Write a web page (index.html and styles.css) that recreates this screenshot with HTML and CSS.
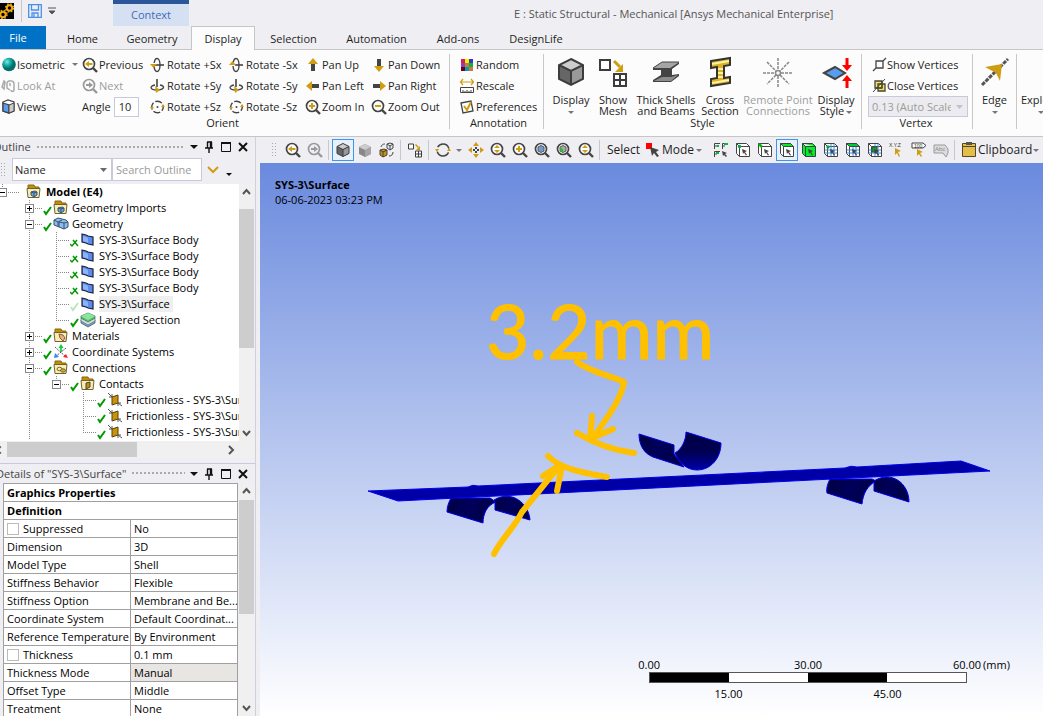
FILE: index.html
```html
<!DOCTYPE html>
<html lang="en">
<head>
<meta charset="utf-8">
<title>E : Static Structural - Mechanical [Ansys Mechanical Enterprise]</title>
<link rel="stylesheet" href="styles.css">
</head>
<body>
<svg class="defs" aria-hidden="true">
  <symbol id="lens" viewBox="0 0 16 16"><circle cx="7" cy="7" r="5.500" fill="#fff" stroke="#444" stroke-width="1.700"/><path d="M11 11l4 4" stroke="#444" stroke-width="2.400"/></symbol>
  <symbol id="zoom-prev" viewBox="0 0 16 16"><use href="#lens"/><path d="M3 7l4-3v2h3.500v2H7v2z" fill="#cf9d12"/></symbol>
  <symbol id="zoom-next" viewBox="0 0 16 16"><g stroke="#999" fill="none"><circle cx="7" cy="7" r="5.500" stroke-width="1.700"/><path d="M11 11l4 4" stroke-width="2.400"/></g><path d="M11 7L7 4v2H4v2h3v2z" fill="#999"/></symbol>
  <symbol id="zoom-in" viewBox="0 0 16 16"><use href="#lens"/><path d="M4 7h6M7 4v6" stroke="#cf9d12" stroke-width="2"/></symbol>
  <symbol id="zoom-out" viewBox="0 0 16 16"><use href="#lens"/><path d="M4 7h6" stroke="#cf9d12" stroke-width="2"/></symbol>
  <symbol id="zoom-drag" viewBox="0 0 16 16"><use href="#lens"/><path d="M4 6l3-3 3 3zM4 8l3 3 3-3z" fill="#cf9d12"/></symbol>
  <symbol id="zoom-blue" viewBox="0 0 16 16"><use href="#lens"/><path d="M4 5l3-1.500L10 5v4l-3 1.500L4 9z" fill="#6f9bd8" stroke="#555"/></symbol>
  <symbol id="zoom-green" viewBox="0 0 16 16"><use href="#lens"/><path d="M4 5l3-1.500L10 5v4l-3 1.500L4 9z" fill="#aaa" stroke="#555"/><path d="M4 6l3 1v3L4 9z" fill="#1fc12e"/></symbol>
  <symbol id="rot-xp" viewBox="0 0 16 16"><ellipse cx="7" cy="8" rx="3" ry="6.500" fill="none" stroke="#444" stroke-width="1.400" stroke-dasharray="14 3"/><path d="M4 8h10" stroke="#444" stroke-width="1.600"/><path d="M0 7h7L3.500 11z" fill="#cf9d12"/></symbol>
  <symbol id="rot-xn" viewBox="0 0 16 16"><ellipse cx="7" cy="8" rx="3" ry="6.500" fill="none" stroke="#444" stroke-width="1.400" stroke-dasharray="14 3"/><path d="M6 8h8" stroke="#444" stroke-width="1.600"/><path d="M0 8h7L3.500 4z" fill="#cf9d12"/></symbol>
  <symbol id="rot-y" viewBox="0 0 16 16"><path d="M5 7C-1 8 0 12 7 12s9-4 3-5" fill="none" stroke="#444" stroke-width="1.400"/><path d="M7 1v8" stroke="#444" stroke-width="1.600"/><path d="M5 8l5 4-4 3z" fill="#cf9d12"/></symbol>
  <symbol id="rot-z" viewBox="0 0 16 16"><circle cx="7.500" cy="8" r="5.800" fill="none" stroke="#444" stroke-width="1.400" stroke-dasharray="7.100 2" stroke-dashoffset="3"/><circle cx="7.500" cy="8" r="1" fill="#444"/><path d="M0 8h4l-2 3zM11 8h4l-2-3z" fill="#cf9d12"/></symbol>
  <symbol id="arrow" viewBox="0 0 16 16"><path d="M8 1l5 6H3z" fill="#cf9d12"/><path d="M6 7h4v7H6z" fill="#444"/></symbol>
  <symbol id="cube" viewBox="0 0 32 32"><path d="M16 3l12 6v14l-12 6-12-6V9z" fill="#666"/><path d="M16 3l12 6-12 6L4 9z" fill="#ccc"/><path d="M28 9v14l-12 6V15z" fill="#999"/><path d="M16 3l12 6v14l-12 6-12-6V9zM4 9l12 6 12-6M16 15v14" fill="none" stroke="#3c3c3c" stroke-width="2"/></symbol>
  <symbol id="mesh" viewBox="0 0 32 32"><g fill="#fff" stroke="#3c3c3c" stroke-width="2"><path d="M3 4h10v10H3zM17 18h12v12H17zM23 18v12M17 24h12"/></g><path d="M17 5l6 6" stroke="#cf9d12" stroke-width="3"/><path d="M26 8v8h-8z" fill="#cf9d12"/></symbol>
  <symbol id="box" viewBox="0 0 16 16"><path d="M1.500 1.500h10l3 3v10h-10l-3-3z" fill="#fff"/><path d="M1.500 11.500v-10h10l3 3v10h-10zM1.500 1.500l3 3h10M4.500 4.500v10" fill="none" stroke="#444"/></symbol>
  <symbol id="tip" viewBox="0 0 16 16"><path d="M7 7l5 2-2 1 2 3-1 .600-2-3-1 1.400z" fill="#444"/></symbol>
  <symbol id="pick-vertex" viewBox="0 0 16 16"><use href="#box"/><use href="#tip"/><circle cx="4.500" cy="4.500" r="1.700" fill="#0a3"/></symbol>
  <symbol id="pick-edge" viewBox="0 0 16 16"><use href="#box"/><use href="#tip"/><path d="M2 2l3 3" stroke="#0b0" stroke-width="2.500"/></symbol>
  <symbol id="pick-face" viewBox="0 0 16 16"><use href="#box"/><path d="M1.500 1.500h10l3 3h-10z" fill="#00ef25" stroke="#444"/><use href="#tip"/></symbol>
  <symbol id="pick-body" viewBox="0 0 16 16"><path d="M1.500 11.500v-10h10l3 3v10h-10zM1.500 1.500l3 3h10M4.500 4.500v10" fill="#00ef25" stroke="#344"/><use href="#tip"/></symbol>
  <symbol id="grid-box" viewBox="0 0 16 16"><use href="#box"/><path d="M8 2v12M11 2v12M2 8h12M2 11h12" stroke="#3c8ee8"/><use href="#tip"/></symbol>
  <symbol id="check" viewBox="0 0 9 16"><path d="M1 11l2 3 5-7" fill="none" stroke="#090" stroke-width="2"/></symbol>
  <symbol id="check-x" viewBox="0 0 9 16"><path d="M0 12l2 2 5-6M3 8l5 6" fill="none" stroke="#090" stroke-width="1.500"/></symbol>
  <symbol id="folder" viewBox="0 0 16 16"><path d="M2 4V1h6l1 2h4v3H2z" fill="#c38d0b" stroke="#8a650a"/><path d="M1 4.500h13l-1 9H2z" fill="#f8eeb0" stroke="#6c6235"/></symbol>
  <symbol id="f-cube" viewBox="0 0 16 16"><use href="#folder"/><path d="M5 8l4-1 2 1v3l-3 2-3-2z" fill="#75a7dc" stroke="#35536f"/><path d="M5 8l3 1 3-1M8 9v4" stroke="#35536f" fill="none"/></symbol>
  <symbol id="f-mat" viewBox="0 0 16 16"><use href="#folder"/><path d="M6 6l4 1 2 3-2 3-3-3z" fill="#e9b186" stroke="#8b5c3c"/></symbol>
  <symbol id="f-con" viewBox="0 0 16 16"><use href="#folder"/><ellipse cx="6.500" cy="9" rx="2.500" ry="1.700" fill="none" stroke="#7c6420"/><ellipse cx="10" cy="10.500" rx="2.500" ry="1.700" fill="#c8aa48" stroke="#7c6420"/></symbol>
  <symbol id="f-contact" viewBox="0 0 16 16"><use href="#folder"/><path d="M6 7l4-1v5l-4 2z" fill="#c38d0b" stroke="#444"/></symbol>
  <symbol id="cubes" viewBox="0 0 16 16"><path d="M1 4l4-2 4 1 4 1 2 2v5l-4 2-5-2-5-2z" fill="#8fbcec" stroke="#35536f"/><path d="M1 4l4 2v4M5 6l4-2M6 6l5 1 4-1M11 7v6M6 6v5" fill="none" stroke="#35536f"/></symbol>
  <symbol id="surface" viewBox="0 0 16 16"><path d="M2 2l4 1 2 1 5 1v8l-5-1-2-1-4-1z" fill="#5b8df0" stroke="#1b2038" stroke-width="1.200"/><path d="M3 4l3 1 2 1v5l-2-1-3-1z" fill="#8db2fa"/></symbol>
  <symbol id="layers" viewBox="0 0 16 16"><path d="M1 8v3l7 4 7-4V8l-7 3z" fill="#6ea5df" stroke="#355" stroke-width=".700"/><path d="M1 6v3l7 4 7-4V6l-7 3z" fill="#ddd" stroke="#576" stroke-width=".700"/><path d="M1 4l7-3 7 3v2l-7 4-7-4z" fill="#5cc871" stroke="#365" stroke-width=".700"/><path d="M1 4l7-3 7 3-7 4z" fill="#8be59a"/></symbol>
  <symbol id="axes" viewBox="0 0 16 16"><path d="M2 3l11 10M13 4L2 13" stroke="#555" stroke-dasharray="2 1"/><path d="M8 2v6" stroke="#0b3" stroke-width="1.500"/><path d="M5.500 4L8 0l2.500 4z" fill="#1c3"/><path d="M1 14l1-5 4 4z" fill="#38f"/><path d="M15 14l-5-1 3-3z" fill="#f22"/></symbol>
  <symbol id="contact" viewBox="0 0 16 16"><path d="M1 1l4 4M5 2v3H2M15 14l-4-3M11 14v-3h3" stroke="#555" fill="none"/><path d="M5 5l6-2v8l-6 2z" fill="#c8920f" stroke="#5b420a"/></symbol>
  <symbol id="pin" viewBox="0 0 12 12"><path d="M4 1h5M4.500 1v6M7.500 1v6M8.500 1v6M2 7h8M6 7v5" fill="none" stroke="#111" stroke-width="1.400"/></symbol>
  <symbol id="max" viewBox="0 0 12 12"><path d="M1.500 1.500h9v9h-9z" fill="none" stroke="#111"/><path d="M1 2h10" stroke="#111" stroke-width="2"/></symbol>
  <symbol id="close" viewBox="0 0 12 12"><path d="M2 2l8 8M10 2l-8 8" stroke="#111" stroke-width="2"/></symbol>
</svg>

<div class="app">
<header class="titlebar">
  <svg class="logo" viewBox="0 0 14 16"><path d="M0 0h14v16H0z"/><g fill="none" stroke="#f0a818"><circle cx="9.500" cy="5" r="2.700" stroke-width="2"/><circle cx="9.500" cy="5" r="4" stroke-width="1.500" stroke-dasharray="1.500 1.700"/><circle cx="3" cy="11.500" r="2.700" stroke-width="2"/><circle cx="3" cy="11.500" r="4" stroke-width="1.500" stroke-dasharray="1.500 1.700"/></g></svg>
  <i class="bar-line"></i>
  <button class="plain" aria-label="Save"><svg class="i14" viewBox="0 0 14 14"><path d="M.7.700h12.600v12.600H.7zM3.500 1v5h7V1M4 13V9h6v4M6 10v3" fill="none" stroke="#4a90e8" stroke-width="1.300"/></svg></button>
  <button class="plain quick" aria-label="Customize"><svg class="i8" viewBox="0 0 8 8"><path d="M0 1h8M1 4h6L4 7z" stroke="#555" fill="#555"/></svg></button>
  <div class="context">Context</div>
  <div class="title">E : Static Structural - Mechanical [Ansys Mechanical Enterprise]</div>
</header>

<nav class="tabs">
  <button class="file">File</button>
  <button class="t-home">Home</button>
  <button class="t-geo">Geometry</button>
  <button class="t-disp active">Display</button>
  <button class="t-sel">Selection</button>
  <button class="t-auto">Automation</button>
  <button class="t-add">Add-ons</button>
  <button class="t-life">DesignLife</button>
</nav>

<section class="ribbon">
  <div class="group orient">
    <div class="cmds">
      <button><svg class="i16" viewBox="0 0 16 16"><defs><radialGradient id="ball" cx=".35" cy=".3"><stop offset="0" stop-color="#7fe8e2"/><stop offset=".5" stop-color="#17b3ac"/><stop offset="1" stop-color="#056e6a"/></radialGradient></defs><circle cx="9" cy="7.500" r="6.800" fill="url(#ball)"/></svg>Isometric<i class="caret far"></i></button>
      <button><svg class="i16"><use href="#zoom-prev"/></svg>Previous</button>
      <button><svg class="i16"><use href="#rot-xp"/></svg>Rotate +Sx</button>
      <button><svg class="i16"><use href="#rot-xn"/></svg>Rotate -Sx</button>
      <button><svg class="i16"><use href="#arrow"/></svg>Pan Up</button>
      <button><svg class="i16 down"><use href="#arrow"/></svg>Pan Down</button>
      <button disabled><svg class="i16" viewBox="0 0 16 16"><path d="M4 3L2 9l2 2 1-7zM7 5c1-3 7-3 7 1v6c0 2-3 2-3 0M7 5v5l3 2M10 5v3" fill="none" stroke="#aaa" stroke-width="1.500"/></svg>Look At</button>
      <button disabled><svg class="i16"><use href="#zoom-next"/></svg>Next</button>
      <button><svg class="i16"><use href="#rot-y"/></svg>Rotate +Sy</button>
      <button><svg class="i16"><use href="#rot-y"/></svg>Rotate -Sy</button>
      <button><svg class="i16 left"><use href="#arrow"/></svg>Pan Left</button>
      <button><svg class="i16 right"><use href="#arrow"/></svg>Pan Right</button>
      <button><svg class="i16" viewBox="0 0 16 16"><path d="M3 3l5-2 6 2v9l-5 2-6-2z" fill="#fff" stroke="#444" stroke-width="1.300"/><path d="M3 4l6 2v8l-6-2z" fill="#5a9cf0" stroke="#444" stroke-width="1.300"/><path d="M9 6l5-2v8l-5 2z" fill="#ccc" stroke="#444"/></svg>Views</button>
      <label class="angle">Angle <input value="10"></label>
      <button><svg class="i16"><use href="#rot-z"/></svg>Rotate +Sz</button>
      <button><svg class="i16"><use href="#rot-z"/></svg>Rotate -Sz</button>
      <button><svg class="i16"><use href="#zoom-in"/></svg>Zoom In</button>
      <button><svg class="i16"><use href="#zoom-out"/></svg>Zoom Out</button>
    </div>
    <div class="label">Orient</div>
  </div>
  <div class="group annot">
    <div class="list">
      <button><svg class="i16" viewBox="0 0 16 16"><path d="M2 2h4v4H2z" fill="#d4204c"/><path d="M6 2h4v4H6z" fill="#f5f000"/><path d="M10 2h4v4h-4z" fill="#3b35c8"/><path d="M2 6h4v4H2z" fill="#8e3fc0"/><path d="M6 6h4v4H6z" fill="#c3803a"/><path d="M10 6h4v4h-4z" fill="#00b83a"/><path d="M2 10h4v4H2z" fill="#710010"/><path d="M6 10h4v4H6z" fill="#009ec0"/><path d="M10 10h4v4h-4z" fill="#e0703a"/></svg>Random</button>
      <button><svg class="i16" viewBox="0 0 16 16"><path d="M2 4h12M4 1L1.500 4 4 7M12 1l2.500 3L12 7" fill="none" stroke="#cf9d12" stroke-width="1.200"/><path d="M1.500 9.500h13v5h-13zM4 12v2M6 13v1M8 12v2M10 13v1M12 12v2" fill="none" stroke="#444"/></svg>Rescale</button>
      <button><svg class="i16" viewBox="0 0 16 16"><path d="M2 4l10-2 2 10-10 2z" fill="#fff" stroke="#444" stroke-width="1.300"/><path d="M5 7l3 4 4-8" fill="none" stroke="#cf9d12" stroke-width="2"/></svg>Preferences</button>
    </div>
    <div class="label">Annotation</div>
  </div>
  <div class="group style">
    <div class="bigs">
      <button><svg class="i32"><use href="#cube"/></svg><span>Display</span><i class="caret"></i></button>
      <button><svg class="i32"><use href="#mesh"/></svg><span>Show<br>Mesh</span></button>
      <button><svg class="i32" viewBox="0 0 32 32"><path d="M3 12l9-6h17l-9 6z" fill="#a5a5a5"/><path d="M3 12h17l9-6v2l-7 5v6l7-1v2l-8 6H3v-2l8-5v-5H3z" fill="#444"/><path d="M4 25l8-4 9 0 7-2-7 6z" fill="#8c8c8c"/><path d="M3 12l9-6h17" fill="none" stroke="#444"/></svg><span>Thick Shells<br>and Beams</span></button>
      <button><svg class="i32" viewBox="0 0 32 32"><path d="M7 5l19-3v7l-6 1v12l6-1v6L7 30v-7l6-1V11l-6 1z" fill="#dbb02a" stroke="#333" stroke-width="2"/><path d="M8 8l17-3M14 13h5M14 17h5M14 21h5M8 27l17-3" stroke="#fff39a" stroke-width="2"/></svg><span>Cross<br>Section</span></button>
      <button disabled><svg class="i32" viewBox="0 0 32 32"><circle cx="16" cy="17" r="2.500" fill="none" stroke="#888" stroke-width="1.500"/><path d="M16 2v12M16 20v12M1 17h12M19 17h12M5 6l9 9M18 19l9 9M27 6l-9 9M14 19l-9 9" stroke="#888" stroke-width="1.500" stroke-dasharray="3 1"/></svg><span>Remote Point<br>Connections</span></button>
      <button><svg class="i32" viewBox="0 0 32 32"><path d="M4 17l11-6 10 6-10 6z" fill="#589cf0" stroke="#444" stroke-width="2"/><path d="M27 2v8M27 32v-8" stroke="red" stroke-width="3"/><path d="M22 9h10l-5 6zM22 25h10l-5-6z" fill="red"/></svg><span>Display<br>Style<i class="caret in"></i></span></button>
    </div>
    <div class="label">Style</div>
  </div>
  <div class="group vertex">
    <div class="list">
      <button><svg class="i16" viewBox="0 0 16 16"><path d="M5 4h7v7H5zM12 4l3-3M5 11l-3 3" fill="none" stroke="#444" stroke-width="1.300"/></svg>Show Vertices</button>
      <button><svg class="i16" viewBox="0 0 16 16"><path d="M4 3h7v7H4zM7 6h7v7H7z" fill="#f9e34a" stroke="#444" stroke-width="1.300"/><path d="M14 1L2 14M4 10h7V3" stroke="#444" fill="none"/></svg>Close Vertices</button>
      <select disabled aria-label="Vertex size"><option>0.13 (Auto Scale)</option></select>
    </div>
    <div class="label">Vertex</div>
  </div>
  <div class="group edge"><button class="big"><svg class="i32" viewBox="0 0 32 32"><path d="M3 29L29 3" stroke="#555" stroke-width="3" stroke-dasharray="4 1"/><path d="M6 11l17-3-2 17-4-8z" fill="#cf9d12"/></svg><span>Edge</span><i class="caret"></i></button></div>
  <div class="group explode"><button class="big"><svg class="i32"></svg><span>Explode</span><i class="caret"></i></button></div>
</section>

<main class="work">
  <aside class="side">
    <section class="outline">
      <div class="panel-head"><span>Outline</span><i class="dots"></i><i class="caret dark"></i><svg class="i12"><use href="#pin"/></svg><svg class="i12"><use href="#max"/></svg><svg class="i12"><use href="#close"/></svg></div>
      <div class="filter"><i class="grip"></i><select aria-label="Filter by"><option>Name</option></select><input placeholder="Search Outline" aria-label="Search Outline"><svg class="chev" viewBox="0 0 12 8"><path d="M1 1l5 5 5-5" fill="none" stroke="#cf9d12" stroke-width="2"/></svg><i class="caret dark low"></i></div>
      <div class="tree-wrap">
        <div class="tree">
          <div class="row root"><i class="joint end"><b class="minus"></b></i><i class="mark dash"></i><svg class="i16"><use href="#f-cube"/></svg><strong>Model (E4)</strong></div>
          <div class="row"><i class="joint"><b class="plus"></b></i><svg class="mark"><use href="#check"/></svg><svg class="i16"><use href="#f-cube"/></svg><span>Geometry Imports</span></div>
          <div class="row"><i class="joint"><b class="minus"></b></i><svg class="mark"><use href="#check"/></svg><svg class="i16"><use href="#cubes"/></svg><span>Geometry</span></div>
          <div class="row"><i class="rail"></i><i class="joint"></i><svg class="mark"><use href="#check-x"/></svg><svg class="i16"><use href="#surface"/></svg><span>SYS-3\Surface Body</span></div>
          <div class="row"><i class="rail"></i><i class="joint"></i><svg class="mark"><use href="#check-x"/></svg><svg class="i16"><use href="#surface"/></svg><span>SYS-3\Surface Body</span></div>
          <div class="row"><i class="rail"></i><i class="joint"></i><svg class="mark"><use href="#check-x"/></svg><svg class="i16"><use href="#surface"/></svg><span>SYS-3\Surface Body</span></div>
          <div class="row"><i class="rail"></i><i class="joint"></i><svg class="mark"><use href="#check-x"/></svg><svg class="i16"><use href="#surface"/></svg><span>SYS-3\Surface Body</span></div>
          <div class="row"><i class="rail"></i><i class="joint"></i><svg class="mark faint"><use href="#check"/></svg><svg class="i16"><use href="#surface"/></svg><span class="picked">SYS-3\Surface</span></div>
          <div class="row"><i class="rail"></i><i class="joint end"></i><svg class="mark"><use href="#check"/></svg><svg class="i16"><use href="#layers"/></svg><span>Layered Section</span></div>
          <div class="row"><i class="joint"><b class="plus"></b></i><svg class="mark"><use href="#check"/></svg><svg class="i16"><use href="#f-mat"/></svg><span>Materials</span></div>
          <div class="row"><i class="joint"><b class="plus"></b></i><svg class="mark"><use href="#check"/></svg><svg class="i16"><use href="#axes"/></svg><span>Coordinate Systems</span></div>
          <div class="row"><i class="joint"><b class="minus"></b></i><svg class="mark"><use href="#check"/></svg><svg class="i16"><use href="#f-con"/></svg><span>Connections</span></div>
          <div class="row"><i class="rail"></i><i class="joint end"><b class="minus"></b></i><svg class="mark"><use href="#check"/></svg><svg class="i16"><use href="#f-contact"/></svg><span>Contacts</span></div>
          <div class="row"><i class="rail"></i><i class="gap"></i><i class="joint"></i><svg class="mark"><use href="#check"/></svg><svg class="i16"><use href="#contact"/></svg><span>Frictionless - SYS-3\Surface</span></div>
          <div class="row"><i class="rail"></i><i class="gap"></i><i class="joint"></i><svg class="mark"><use href="#check"/></svg><svg class="i16"><use href="#contact"/></svg><span>Frictionless - SYS-3\Surface</span></div>
          <div class="row"><i class="rail"></i><i class="gap"></i><i class="joint end"></i><svg class="mark"><use href="#check"/></svg><svg class="i16"><use href="#contact"/></svg><span>Frictionless - SYS-3\Surface</span></div>
        </div>
        <div class="vbar"><svg viewBox="0 0 15 16"><path d="M4 10l3.500-4 3.500 4" /></svg><i class="thumb tree-thumb"></i><svg viewBox="0 0 15 16"><path d="M4 6l3.500 4L11 6"/></svg></div>
      </div>
      <div class="hbar"><svg viewBox="0 0 8 16"><path d="M1 4l-4 4 4 4"/></svg><i></i><svg viewBox="0 0 16 16"><path d="M6 4l4 4-4 4"/></svg></div>
    </section>
    <section class="details">
      <div class="panel-head"><span>Details of "SYS-3\Surface"</span><i class="dots"></i><i class="caret dark"></i><svg class="i12"><use href="#pin"/></svg><svg class="i12"><use href="#max"/></svg><svg class="i12"><use href="#close"/></svg></div>
      <div class="details-wrap">
        <div class="table-box">
        <table>
          <colgroup><col class="key"><col></colgroup>
          <tr><th colspan="2">Graphics Properties</th></tr>
          <tr><th colspan="2">Definition</th></tr>
          <tr><td><label><input type="checkbox">Suppressed</label></td><td>No</td></tr>
          <tr><td>Dimension</td><td>3D</td></tr>
          <tr><td>Model Type</td><td>Shell</td></tr>
          <tr><td>Stiffness Behavior</td><td>Flexible</td></tr>
          <tr><td>Stiffness Option</td><td>Membrane and Be...</td></tr>
          <tr><td>Coordinate System</td><td>Default Coordinat...</td></tr>
          <tr><td>Reference Temperature</td><td>By Environment</td></tr>
          <tr><td><label><input type="checkbox">Thickness</label></td><td>0.1 mm</td></tr>
          <tr><td>Thickness Mode</td><td class="locked">Manual</td></tr>
          <tr><td>Offset Type</td><td>Middle</td></tr>
          <tr><td>Treatment</td><td>None</td></tr>
        </table>
        </div>
        <div class="vbar"><svg viewBox="0 0 15 16"><path d="M4 10l3.500-4 3.500 4"/></svg><i class="thumb details-thumb"></i><svg viewBox="0 0 15 16"><path d="M4 6l3.500 4L11 6"/></svg></div>
      </div>
    </section>
  </aside>

  <section class="view">
    <div class="toolbar">
      <i class="grip"></i>
      <button><svg class="i16"><use href="#zoom-prev"/></svg></button>
      <button><svg class="i16"><use href="#zoom-next"/></svg></button>
      <i class="sep"></i>
      <button class="on"><svg class="i16"><use href="#cube"/></svg></button>
      <button><svg class="i16" viewBox="0 0 16 16"><path d="M8 2l6 3v7l-6 3-6-3V5z" fill="#888"/><path d="M8 2l6 3-6 3-6-3z" fill="#ccc"/><path d="M14 5v7l-6 3V8z" fill="#a5a5a5"/></svg></button>
      <button><svg class="i16" viewBox="0 0 16 16"><path d="M1 8l4-1 3 1v5l-4 2-3-2z" fill="#c8920f" stroke="#444"/><path d="M1 8l3 2 4-2M4 10v5M8 2l3-1 3 1v4l-3 2-3-2zM8 2l3 2 3-2M11 4v4M2 5c1-3 3-3 4-3M14 10c0 3-2 4-4 4" fill="none" stroke="#444"/></svg></button>
      <i class="sep"></i>
      <button><svg class="i16"><use href="#mesh"/></svg></button>
      <i class="sep"></i>
      <button><svg class="i16" viewBox="0 0 16 16"><circle cx="8" cy="8" r="6" fill="none" stroke="#444" stroke-width="1.500" stroke-dasharray="14 4.800" stroke-dashoffset="-2.500"/><path d="M0 7h4l-2 3zM12 9h4l-2-3z" fill="#cf9d12"/></svg></button>
      <i class="caret"></i>
      <button><svg class="i16" viewBox="0 0 16 16"><path d="M5 4l3-4 3 4zM5 12l3 4 3-4zM4 5L0 8l4 3zM12 5l4 3-4 3z" fill="#cf9d12"/><path d="M7 5h2v2H7zM7 9h2v2H7zM5 7h2v2H5zM9 7h2v2H9z" fill="#444"/></svg></button>
      <button><svg class="i16"><use href="#zoom-drag"/></svg></button>
      <button><svg class="i16"><use href="#zoom-in"/></svg></button>
      <button><svg class="i16"><use href="#zoom-blue"/></svg></button>
      <button><svg class="i16"><use href="#zoom-green"/></svg></button>
      <button><svg class="i16"><use href="#zoom-drag"/></svg></button>
      <i class="sep"></i>
      <span class="word">Select</span>
      <button class="word mode"><svg class="i16" viewBox="0 0 16 16"><path d="M0 1h6v6H0z" fill="red"/><path d="M4 5l9 3-3 2 3 4-2 1-3-4-2 3z" fill="#444"/></svg>Mode<i class="caret in"></i></button>
      <button><svg class="i16" viewBox="0 0 16 16"><path d="M1.500 7V1.500H7M1.500 4H4M9.500 7V1.500H15M9.500 4H12M1.500 15V9.500H7M1.500 12H4" fill="none" stroke="#444"/><path d="M4 3h2v2H4zM11 1h4v2h-4zM3 10h3v2H3z" fill="#0b3"/><path d="M9 9l5 2-2 1 2 2-1 1-2-2-1 1z" fill="#444"/></svg></button>
      <button><svg class="i16"><use href="#pick-vertex"/></svg></button>
      <button><svg class="i16"><use href="#pick-edge"/></svg></button>
      <button class="on"><svg class="i16"><use href="#pick-face"/></svg></button>
      <button><svg class="i16"><use href="#pick-body"/></svg></button>
      <button><svg class="i16" viewBox="0 0 16 16"><use href="#grid-box"/><circle cx="5" cy="5" r="1.700" fill="#0a3"/></svg></button>
      <button><svg class="i16" viewBox="0 0 16 16"><use href="#grid-box"/><path d="M1.500 1.500h10l3 3h-10z" fill="#0c3" stroke="#444"/></svg></button>
      <button><svg class="i16" viewBox="0 0 16 16"><use href="#grid-box"/><path d="M5 5h5v5H5z" fill="#0a3" stroke="#444"/><use href="#tip"/></svg></button>
      <button><svg class="i16" viewBox="0 0 16 16"><text x="0" y="5" class="tiny">X.Y.Z</text><path d="M6 6l6 3-3 1 2 4-1 1-2-4-2 2z" fill="#cf9d12"/></svg></button>
      <button><svg class="i16" viewBox="0 0 16 16"><path d="M1 1h11l3 2.500L12 6H1z" fill="#fff" stroke="#444"/><text x="3" y="5.500" class="tiny">100</text><path d="M6 7l6 3-3 1 2 3-1 1-2-3-2 2z" fill="#cf9d12"/></svg></button>
      <button disabled><svg class="i16" viewBox="0 0 16 16"><path d="M1 3h11l3 4v4l-2 4-3-4H1z" fill="#ddd" stroke="#999"/><text x="2" y="9" class="abc">Abc</text></svg></button>
      <i class="sep"></i>
      <button class="word clip"><svg class="i16" viewBox="0 0 16 16"><path d="M1.500 1.500h13v13h-13z" fill="#e5bd49" stroke="#51482a"/><path d="M5 0h6v3H5z" fill="#555"/><path d="M2 4.500h12" stroke="#51482a"/></svg>Clipboard<i class="caret in"></i></button>
    </div>
    <div class="canvas">
      <svg class="scene" viewBox="0 0 783 553" preserveAspectRatio="xMidYMid meet">
        <defs>
          <linearGradient id="cyl" x1="0" y1="0" x2="1" y2=".3"><stop offset="0" stop-color="#000040"/><stop offset=".5" stop-color="#00005a"/><stop offset="1" stop-color="#000048"/></linearGradient>
          <linearGradient id="trough" x1="0" y1="0" x2="0" y2="1"><stop offset="0" stop-color="#000045"/><stop offset=".5" stop-color="#000050"/><stop offset="1" stop-color="#0000a5"/></linearGradient>
        </defs>
        <g transform="translate(-260 -163)" stroke="#0000f0" stroke-linejoin="round">
          <path d="M639 434L674 445V454L684 467 653 457C643 453 639 444 639 434Z" fill="url(#cyl)"/>
          <path d="M686 432L721 443C721 458 711 470 697 470 687 470 679 463 675 453 682 449 686 440 686 432Z" fill="url(#trough)"/>
          <path d="M451 498H490L496 502C487 505 483 514 483 523L447 512C447 506 449 502 451 498Z" fill="url(#cyl)"/>
          <path d="M494 500C512 489 529 504 530 520L495 510V502Z" fill="url(#cyl)"/>
          <path d="M830 479H872L876 481C867 486 863 494 862 504L827 493C826 488 828 483 830 479Z" fill="url(#cyl)"/>
          <path d="M874 481C891 470 909 483 909 502L874 491Z" fill="url(#cyl)"/>
          <path d="M368 491L468 487Q473 484 478 486L845 468Q851 465 857 467L961 461 990 471 398 501Z" fill="#0000a6"/>
        </g>
        <g transform="translate(-260 -163)" fill="none" stroke="#ffc000" stroke-width="6" stroke-linecap="round" stroke-linejoin="round">
          <path d="M577 362C592 373 610 375 624 382 621 401 604 421 592 440M592 416L590 439 613 429M577 433C592 442 610 450 634 453"/>
          <path d="M548 456C562 470 585 473 607 477M494 554C499 542 514 528 522 512L560 465 543 476M562 466L557 491" />
        </g>
        <text x="226" y="196" class="ink">3.2mm</text>
      </svg>
      <div class="caption"><strong>SYS-3\Surface</strong><span>06-06-2023 03:23 PM</span></div>
      <div class="scale">
        <div class="marks"><span>0.00</span><span>30.00</span><span>60.00</span></div>
        <div class="ruler"><i></i><i></i><i></i><i></i></div>
        <div class="marks under"><span>15.00</span><span>45.00</span></div>
        <span class="unit">(mm)</span>
      </div>
    </div>
  </section>
</main>
</div>
</body>
</html>
```
FILE: styles.css
```css
* { box-sizing: border-box; }
body { margin: 0; font: 11px/16px "Open Sans", "Noto Sans", sans-serif; color: #1e1e1e; background: #efeef2; }
button, input, select { font: inherit; color: inherit; margin: 0; }
button { background: none; border: 0; padding: 0; white-space: nowrap; }
button:disabled { color: #9c9c9c; }
svg { display: block; flex: none; }
i { flex: none; }
.defs { position: absolute; width: 0; height: 0; }
.i8 { width: 8px; height: 8px; }
.i12 { width: 12px; height: 12px; }
.i14 { width: 14px; height: 14px; }
.i16 { width: 16px; height: 16px; }
.i32 { width: 32px; height: 32px; }
.down { transform: rotate(180deg); }
.left { transform: rotate(-90deg); }
.right { transform: rotate(90deg); }
.caret { display: inline-block; width: 0; height: 0; border: 3px solid transparent; border-top-color: #777; border-bottom: 0; }
.caret.dark { border-width: 4px 4px 0; border-top-color: #111; }
.caret.low { align-self: flex-end; margin-bottom: 6px; border-width: 3px 3px 0; }
.caret.in { margin-left: 2px; vertical-align: middle; }
.caret.far { margin-left: 6px; }

.app { display: flex; flex-direction: column; height: 100vh; overflow: hidden; }

.titlebar { display: flex; align-items: center; height: 26px; flex: none; }
.logo { width: 14px; height: 16px; margin-bottom: 4px; }
.bar-line { width: 1px; height: 22px; margin: 0 6px 4px 7px; background: #c8c8cc; }
.titlebar .plain { margin-bottom: 4px; }
.titlebar .quick { margin-left: 6px; }
.context { align-self: stretch; width: 76px; margin-left: 57px; border-top: 4px solid #2b579a; background: #d5e0f2; color: #3f6cba; text-align: center; line-height: 22px; }
.title { flex: 1; margin-left: 325px; color: #555; white-space: nowrap; padding-top: 2px; }

.tabs { display: flex; height: 24px; flex: none; border-bottom: 1px solid #c6c6c6; }
.tabs button { height: 24px; padding-top: 2px; }
.tabs .file { width: 46px; height: 23px; margin-right: 6px; padding: 0 10px 0 0; background: #0072c6; color: #fff; }
.t-home { width: 61px; }
.t-geo { width: 78px; }
.t-disp { width: 64px; }
.t-sel { width: 77px; }
.t-auto { width: 89px; }
.t-add { width: 74px; }
.t-life { width: 82px; }
.tabs .active { padding-top: 1px; background: #fcfcfc; border: 1px solid #c6c6c6; border-bottom: 0; }

.ribbon { display: flex; height: 87px; flex: none; padding-top: 4px; background: #fcfcfc; border-bottom: 1px solid #c6c6c6; overflow: hidden; }
.group { display: flex; flex-direction: column; flex: none; position: relative; height: 75px; border-right: 1px solid #c8c8c8; }
.label { text-align: center; line-height: 12px; }
.cmds { display: grid; grid-template-columns: 82px 68px 79px 76px 66px 78px; grid-auto-rows: 21px; }
.cmds button, .list button { display: flex; align-items: center; height: 21px; }
.cmds button { gap: 1px; }
.orient .label { padding-right: 4px; }
.angle { display: flex; align-items: center; gap: 3px; }
.angle input { width: 25px; height: 20px; padding: 0 4px; border: 1px solid #c9c9dd; background: #fff; }
.annot { width: 94px; }
.annot .list { padding-left: 9px; }
.annot .list button { gap: 1px; }
.annot .label { padding-left: 4px; }
.bigs { display: grid; grid-template-columns: 40px 40px 62px 42px 70px 42px; gap: 2px; padding: 0 4px 0 7px; height: 63px; }
.bigs button, .big { display: flex; flex-direction: column; align-items: center; justify-content: flex-start; line-height: 11px; text-align: center; }
.bigs .i32, .big .i32 { margin: 2px 0 6px; }
.bigs > button > .caret, .big > .caret { margin-top: 6px; }
.vertex { width: 111px; }
.vertex .list { padding-left: 6px; height: 63px; }
.vertex .list .i16 { margin-left: 3px; }
.vertex select { display: block; width: 100px; height: 21px; padding: 0 16px 0 3px; border: 1px solid #c9c9dd; color: #9c9c9c; opacity: 1; appearance: none; background: #ebebf0 url("data:image/svg+xml,%3Csvg xmlns='http://www.w3.org/2000/svg' width='7' height='4'%3E%3Cpath d='M0 0h7L3.500 4z' fill='%23c0c0d0'/%3E%3C/svg%3E") no-repeat right 4px center; }
.vertex .label { padding-right: 2px; }
.edge { width: 44px; padding: 0 8px; }
.explode { padding-left: 4px; border: 0; }

.work { display: flex; flex: 1; min-height: 0; }
.side { display: flex; flex-direction: column; width: 256px; flex: none; border-right: 1px solid #d0d0d8; }
.panel-head { display: flex; align-items: center; height: 20px; padding-right: 6px; color: #444; }
.panel-head span { margin-left: -7px; white-space: nowrap; }
.details .panel-head { border-top: 1px solid #c9c9dd; }
.details .panel-head span { margin-left: -4px; }
.panel-head .dots { flex: 1; height: 5px; margin: 0 5px; background: radial-gradient(circle, #aaa 0 1px, transparent 1px) 0 0 / 4px 4px; }
.panel-head .i12 { margin-left: 5px; }
.filter { display: flex; align-items: center; height: 27px; padding-bottom: 2px; }
.grip { width: 5px; height: 16px; background: radial-gradient(circle, #aaa 0 1px, transparent 1px) 0 0 / 3px 3px; }
.filter .grip { margin-right: 7px; }
.filter select, .filter input { height: 23px; border: 1px solid #c9c9dd; background: #fff; border-radius: 0; }
.filter select { width: 100px; padding: 0 2px; appearance: none; background: #fff url("data:image/svg+xml,%3Csvg xmlns='http://www.w3.org/2000/svg' width='7' height='4'%3E%3Cpath d='M0 0h7L3.500 4z' fill='%23667'/%3E%3C/svg%3E") no-repeat right 4px center; }
.filter input { width: 90px; padding: 0 3px; }
.filter input::placeholder { color: #9a9a9a; }
.chev { width: 12px; height: 8px; margin: 0 7px 0 5px; }
.outline { flex: none; }
.tree-wrap { display: flex; height: 257px; }
.tree { flex: 1; min-width: 0; overflow: hidden; background: #fff; color: #000; }
.row { display: flex; height: 16px; padding-left: 16px; white-space: nowrap; }
.row.root { margin-left: -27px; }
.row > .i16 { margin: 0 3px 0 1px; }
.row strong { padding-left: 1px; }
.rail, .joint, .gap { width: 27px; height: 16px; }
.rail { background: repeating-linear-gradient(#888 0 1px, #fff 1px 2px) 13px 0 / 1px 100% no-repeat; }
.joint { display: grid; padding: 4px 0 0 9px; background: repeating-linear-gradient(#888 0 1px, #fff 1px 2px) 13px 0 / 1px 100% no-repeat, repeating-linear-gradient(90deg, #888 0 1px, #fff 1px 2px) 13px 8px / 14px 1px no-repeat; }
.joint.end { background-size: 1px 8px, 14px 1px; }
.joint b { width: 9px; height: 9px; border: 1px solid #888; background: linear-gradient(#000, #000) center / 5px 1px no-repeat #fff; }
.joint .plus { background: linear-gradient(#000, #000) center / 5px 1px no-repeat, linear-gradient(#000, #000) center / 1px 5px no-repeat #fff; }
.mark { width: 9px; height: 16px; }
.mark.dash { background: repeating-linear-gradient(90deg, #888 0 1px, #fff 1px 2px) 0 8px / 3px 1px no-repeat; }
.faint { opacity: .25; }
.picked { background: #efefef; padding-right: 3px; }
.vbar { display: flex; flex-direction: column; width: 15px; margin-right: 1px; background: #f0f0f0; }
.vbar svg:last-child { margin-top: auto; }
.vbar svg, .hbar svg { height: 16px; }
.vbar path, .hbar path { fill: none; stroke: #555; stroke-width: 2; }
.thumb { background: #cdcdcd; margin-top: 9px; }
.tree-thumb { height: 139px; }
.details-thumb { height: 114px; margin-top: 1px; }
.hbar { display: flex; align-items: center; height: 17px; background: #f0f0f0; margin-bottom: 5px; }
.hbar svg:first-child { width: 7px; }
.hbar i { width: 130px; height: 15px; background: #cdcdcd; margin-right: 86px; }
.hbar svg:last-child { width: 16px; }

.details { display: flex; flex-direction: column; flex: 1; min-height: 0; }
.details-wrap { display: flex; flex: 1; min-height: 0; overflow: hidden; }
.table-box { flex: 1; padding: 0 1px 0 3px; background: #efeef2; }
table { width: 100%; border-collapse: collapse; table-layout: fixed; background: #fff; color: #000; }
.key { width: 127px; }
th, td { height: 18px; padding: 0 0 0 3px; border: 1px solid #a0a0a0; line-height: 16px; text-align: left; white-space: nowrap; overflow: hidden; }
td label { display: flex; align-items: center; }
td input { appearance: none; width: 12px; height: 12px; margin-right: 4px; border: 1px solid #bbb; background: #fff; }
.locked { background: #e8e6e2; }

.view { display: flex; flex-direction: column; flex: 1; min-width: 0; padding-left: 4px; }
.toolbar { display: flex; align-items: center; height: 26px; flex: none; padding-left: 11px; white-space: nowrap; overflow: hidden; }
.toolbar .grip { margin-right: 6px; }
.toolbar button { display: flex; align-items: center; justify-content: center; width: 22px; height: 22px; flex: none; }
.toolbar .on { border: 1px solid #3a96f5; background: #e8f0fa; }
.sep { width: 1px; height: 20px; margin: 0 3px 0 2px; background: #c8c8cc; }
.toolbar > .caret { margin: 0 3px 0 2px; }
.word { font-size: 12px; }
span.word { width: 39px; padding-left: 4px; }
.toolbar .mode { width: 68px; justify-content: flex-start; padding-left: 4px; }
.toolbar .clip { width: auto; gap: 1px; padding-left: 3px; }
.clip .caret { margin-left: 0; }
.tiny { font: 5px "Liberation Sans", sans-serif; fill: #333; }
.abc { font: 6px "Liberation Sans", sans-serif; fill: #888; }
.canvas { position: relative; flex: 1; min-height: 0; background: linear-gradient(#6a8ade, #fff); color: #000; }
.scene { width: 100%; height: 100%; }
.ink { font: 75px Lato, sans-serif; fill: #ffc000; stroke: #ffc000; stroke-width: 1px; stroke-linejoin: round; }
.caption { position: absolute; left: 15px; top: 14px; display: grid; line-height: 15px; }
.scale { position: absolute; left: 49.700%; right: 9.700%; bottom: 15px; }
.marks { display: flex; justify-content: space-between; margin: 0 -20px; line-height: 14px; }
.marks span { width: 40px; text-align: center; }
.ruler { display: grid; grid-template-columns: repeat(4, 1fr); height: 11px; border: 1px solid #555; background: #fff; }
.ruler i:nth-child(odd) { background: #000; }
.marks.under { justify-content: space-around; margin: 4px 0 0; }
.unit { position: absolute; left: 100%; top: 0; padding-left: 16px; line-height: 14px; }
```
